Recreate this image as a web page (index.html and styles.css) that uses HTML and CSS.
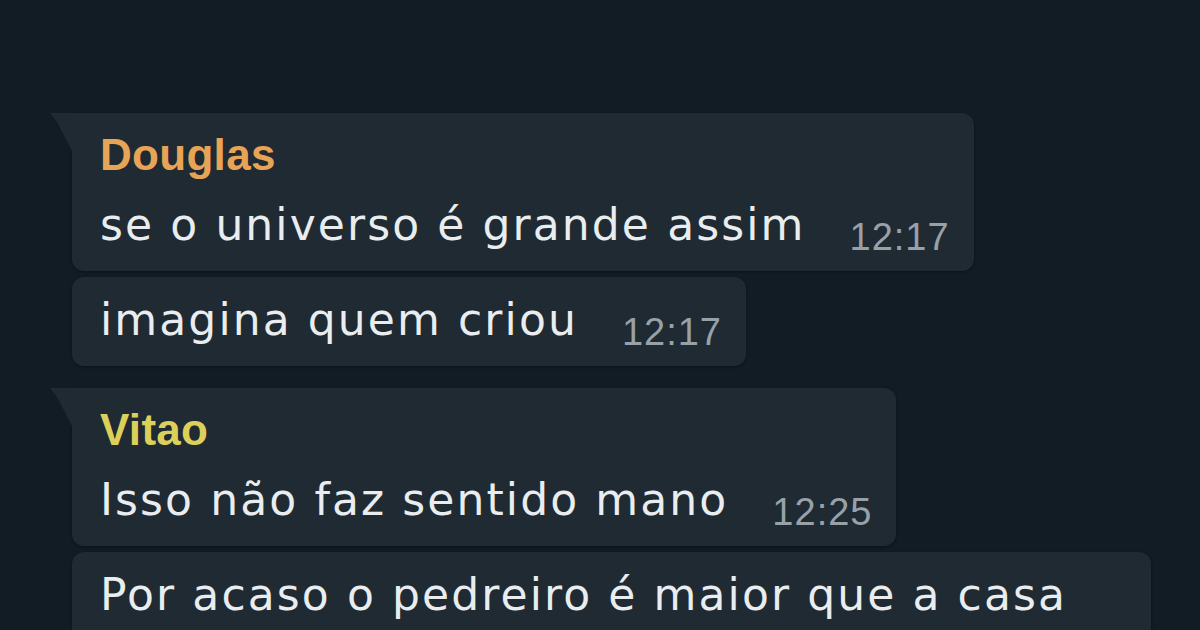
FILE: index.html
```html
<!DOCTYPE html>
<html lang="pt">
<head>
<meta charset="utf-8">
<title>Chat</title>
<link rel="stylesheet" href="styles.css">
</head>
<body>
<div class="chat">
  <div class="group">
    <div class="bubble first">
      <div class="name douglas">Douglas</div>
      <div class="row"><span class="text">se o universo é grande assim</span><span class="time">12:17</span></div>
    </div>
    <div class="bubble">
      <div class="row"><span class="text">imagina quem criou</span><span class="time">12:17</span></div>
    </div>
  </div>
  <div class="group">
    <div class="bubble first">
      <div class="name vitao">Vitao</div>
      <div class="row"><span class="text">Isso não faz sentido mano</span><span class="time">12:25</span></div>
    </div>
    <div class="bubble wide">
      <div class="row"><span class="text">Por acaso o pedreiro é maior que a casa</span></div>
    </div>
  </div>
</div>
</body>
</html>
```
FILE: styles.css
```css
html, body {
  margin: 0;
  padding: 0;
  background: #121c24;
  width: 1200px;
  height: 630px;
  overflow: hidden;
  font-family: Roboto, "Noto Sans", sans-serif;
}
.chat {
  display: flex;
  flex-direction: column;
  gap: 22px;
  padding: 113px 0 0 72px;
}
.group {
  display: flex;
  flex-direction: column;
  align-items: flex-start;
  gap: 6px;
}
.bubble {
  position: relative;
  background: #1f2a33;
  border-radius: 12px;
  padding: 14px 24px 17px 28px;
  box-shadow: 0 1px 3px rgba(0,0,0,0.35);
}
.bubble.first {
  border-top-left-radius: 0;
  padding-top: 18px;
}
.bubble.first::before {
  content: "";
  position: absolute;
  left: -22px;
  top: 0;
  width: 22px;
  height: 38px;
  background: #1f2a33;
  clip-path: polygon(0 0, 100% 0, 100% 100%, 30% 22%, 10% 8%);
}
.bubble.wide {
  padding-right: 84px;
}
.name {
  font-family: "Liberation Sans", Arial, sans-serif;
  font-weight: 700;
  font-size: 44px;
  line-height: 48px;
  letter-spacing: 0.3px;
  margin-bottom: 17px;
}
.douglas { color: #e8a456; }
.vitao { color: #ddd05a; }
.row {
  display: flex;
  align-items: flex-end;
}
.text {
  font-family: "DejaVu Sans", Roboto, sans-serif;
  color: #e9edef;
  font-size: 44px;
  line-height: 58px;
  letter-spacing: 2.1px;
}
.time {
  font-family: "Liberation Sans", Arial, sans-serif;
  color: #98a1a8;
  font-size: 38px;
  line-height: 34px;
  letter-spacing: 1px;
  margin-left: 44px;
}
```
